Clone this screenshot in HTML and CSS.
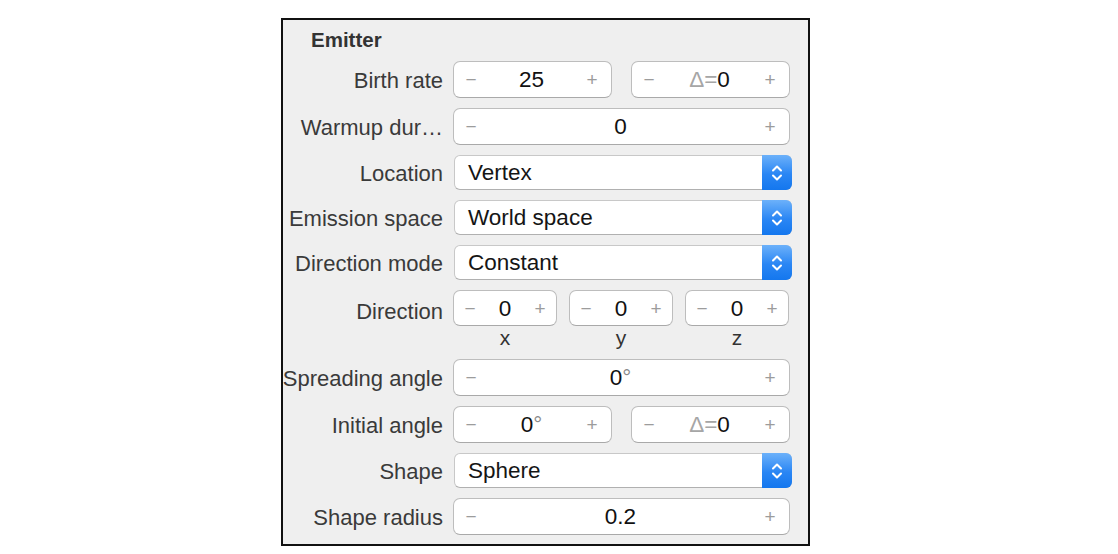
FILE: index.html
```html
<!DOCTYPE html>
<html lang="en">
<head>
<meta charset="utf-8">
<title>Emitter</title>
<link rel="stylesheet" href="styles.css">
</head>
<body>
<section class="panel">
  <h2 class="panel-title">Emitter</h2>
  <div class="form">
    <label class="label">Birth rate</label>
    <div class="pair">
      <div class="stepper"><span class="op">−</span><span class="val">25</span><span class="op">+</span></div>
      <div class="stepper"><span class="op">−</span><span class="val"><span class="delta">Δ=</span>0</span><span class="op">+</span></div>
    </div>

    <label class="label">Warmup dur…</label>
    <div class="stepper"><span class="op">−</span><span class="val">0</span><span class="op">+</span></div>

    <label class="label">Location</label>
    <div class="popup"><span class="popup-val">Vertex</span><span class="popup-btn"><svg viewBox="0 0 14 22" width="14" height="22"><path d="M3 8.5 L7 4.5 L11 8.5 M3 13.5 L7 17.5 L11 13.5" fill="none" stroke="#fff" stroke-width="2" stroke-linecap="round" stroke-linejoin="round"/></svg></span></div>

    <label class="label">Emission space</label>
    <div class="popup"><span class="popup-val">World space</span><span class="popup-btn"><svg viewBox="0 0 14 22" width="14" height="22"><path d="M3 8.5 L7 4.5 L11 8.5 M3 13.5 L7 17.5 L11 13.5" fill="none" stroke="#fff" stroke-width="2" stroke-linecap="round" stroke-linejoin="round"/></svg></span></div>

    <label class="label">Direction mode</label>
    <div class="popup"><span class="popup-val">Constant</span><span class="popup-btn"><svg viewBox="0 0 14 22" width="14" height="22"><path d="M3 8.5 L7 4.5 L11 8.5 M3 13.5 L7 17.5 L11 13.5" fill="none" stroke="#fff" stroke-width="2" stroke-linecap="round" stroke-linejoin="round"/></svg></span></div>

    <label class="label label-top">Direction</label>
    <div class="triple">
      <div class="axis">
        <div class="stepper small"><span class="op">−</span><span class="val">0</span><span class="op">+</span></div>
        <span class="axis-name">x</span>
      </div>
      <div class="axis">
        <div class="stepper small"><span class="op">−</span><span class="val">0</span><span class="op">+</span></div>
        <span class="axis-name">y</span>
      </div>
      <div class="axis">
        <div class="stepper small"><span class="op">−</span><span class="val">0</span><span class="op">+</span></div>
        <span class="axis-name">z</span>
      </div>
    </div>

    <label class="label">Spreading angle</label>
    <div class="stepper"><span class="op">−</span><span class="val">0<span class="deg">°</span></span><span class="op">+</span></div>

    <label class="label">Initial angle</label>
    <div class="pair">
      <div class="stepper"><span class="op">−</span><span class="val">0<span class="deg">°</span></span><span class="op">+</span></div>
      <div class="stepper"><span class="op">−</span><span class="val"><span class="delta">Δ=</span>0</span><span class="op">+</span></div>
    </div>

    <label class="label">Shape</label>
    <div class="popup"><span class="popup-val">Sphere</span><span class="popup-btn"><svg viewBox="0 0 14 22" width="14" height="22"><path d="M3 8.5 L7 4.5 L11 8.5 M3 13.5 L7 17.5 L11 13.5" fill="none" stroke="#fff" stroke-width="2" stroke-linecap="round" stroke-linejoin="round"/></svg></span></div>

    <label class="label">Shape radius</label>
    <div class="stepper"><span class="op">−</span><span class="val">0.2</span><span class="op">+</span></div>
  </div>
</section>
</body>
</html>
```
FILE: styles.css
```css
html, body {
  margin: 0;
  padding: 0;
  background: #ffffff;
}

body {
  font-family: "Liberation Sans", Arial, sans-serif;
  color: #333333;
}

.panel {
  box-sizing: border-box;
  width: 529px;
  height: 528px;
  margin: 18px 0 0 281px;
  border: 2px solid #111111;
  background: #efefef;
  padding: 8px 17px 0 0;
}

.panel-title {
  margin: 0 0 0 28px;
  height: 33px;
  font-size: 20.5px;
  font-weight: bold;
  line-height: 24px;
  color: #333333;
}

.form {
  display: grid;
  grid-template-columns: 160px 337px;
  column-gap: 10px;
  row-gap: 10px;
  align-items: center;
}

.label {
  justify-self: end;
  padding-top: 2px;
  font-size: 22px;
  color: #3a3a3a;
  white-space: nowrap;
}

.label-top {
  align-self: start;
  margin-top: 7px;
}

.pair {
  display: grid;
  grid-template-columns: 159px 159px;
  column-gap: 19px;
}

.stepper {
  box-sizing: border-box;
  height: 37px;
  display: flex;
  align-items: center;
  justify-content: space-between;
  padding: 1px 11px 0 9px;
  background: #ffffff;
  border: 1.5px solid #bdbdbd;
  border-bottom-color: #a9a9a9;
  border-radius: 7px;
}

.op {
  width: 16px;
  text-align: center;
  font-size: 19px;
  color: #9c9c9c;
}

.val {
  font-size: 22.5px;
  color: #111111;
}

.delta {
  color: #a6a6a6;
}

.deg {
  color: #8a8a8a;
}

.triple {
  display: grid;
  grid-template-columns: 104px 104px 104px;
  column-gap: 12px;
}

.axis {
  display: flex;
  flex-direction: column;
  align-items: center;
}

.axis .stepper {
  width: 100%;
  height: 36px;
  padding: 1px 8px 0 8px;
}

.axis-name {
  height: 23px;
  line-height: 24px;
  font-size: 21px;
  color: #333333;
}

.popup {
  box-sizing: border-box;
  height: 35px;
  width: 338px;
  display: flex;
  align-items: stretch;
  background: #ffffff;
  border: 1px solid #c8c8c8;
  border-bottom-color: #b0b0b0;
  border-radius: 6px;
  margin-left: 1px;
}

.popup-val {
  flex: 1;
  display: flex;
  align-items: center;
  padding: 1px 0 0 13px;
  font-size: 22.5px;
  color: #151515;
}

.popup-btn {
  width: 30px;
  margin: -1px -1px -1px 0;
  display: flex;
  align-items: center;
  justify-content: center;
  border-radius: 0 6px 6px 0;
  background: linear-gradient(#6cb1fa, #2a86f4 55%, #1477ee);
}
```
